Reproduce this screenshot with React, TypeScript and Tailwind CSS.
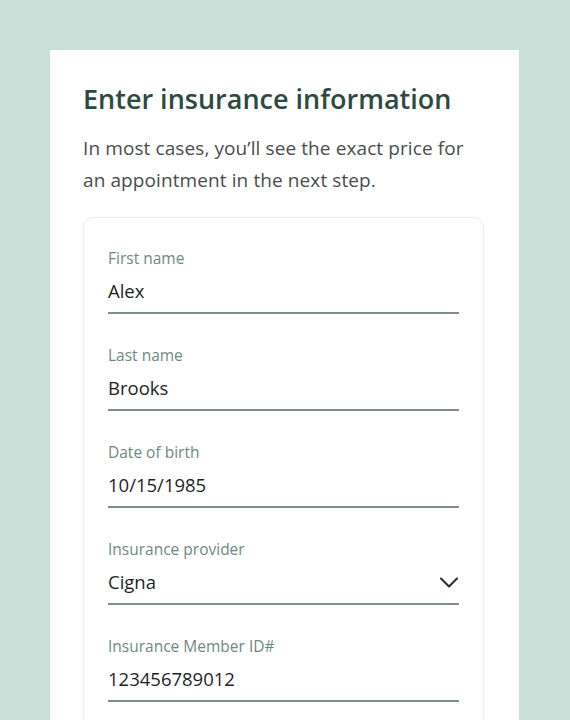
const fields = [
  { label: "First name", value: "Alex" },
  { label: "Last name", value: "Brooks" },
  { label: "Date of birth", value: "10/15/1985" },
  { label: "Insurance provider", value: "Cigna", select: true },
  { label: "Insurance Member ID#", value: "123456789012" },
];

export default function App() {
  return (
    <div className="min-h-screen bg-[#c9e0d8] pt-[50px] pl-[50px] pr-[51px] font-['Open_Sans',sans-serif]">
      <div className="bg-white pl-[33px] pr-[35px] pt-[31px] pb-10">
        <h1 className="text-[27px] leading-[36px] font-semibold text-[#2d4a3f]">
          Enter insurance information
        </h1>
        <p className="mt-[15px] text-[19px] leading-[32px] tracking-[0.1px] text-[#4a4d4c]">
          In most cases, you’ll see the exact price for an appointment in the next step.
        </p>

        <div className="mt-[21px] rounded-[10px] border border-[#ececec] px-6 pt-[30px] pb-8 flex flex-col gap-[31px]">
          {fields.map((f, idx) => (
            <div key={idx} className="flex flex-col">
              <label className="text-[15.5px] leading-[20px] text-[#6e8a7d]">{f.label}</label>
              <div className="mt-[10px] pb-2 flex items-center justify-between border-b-2 border-[#7d8f88]">
                <span className="text-[18.5px] leading-[26px] text-[#1f1f1f]">{f.value}</span>
                {f.select && (
                  <svg width="18" height="11" viewBox="0 0 18 11" fill="none" className="mr-[1px]">
                    <path d="M1 1.5 9 9.5 17 1.5" stroke="#2a2a2a" strokeWidth="2" strokeLinecap="round" strokeLinejoin="round" />
                  </svg>
                )}
              </div>
            </div>
          ))}
        </div>
      </div>
    </div>
  );
}
